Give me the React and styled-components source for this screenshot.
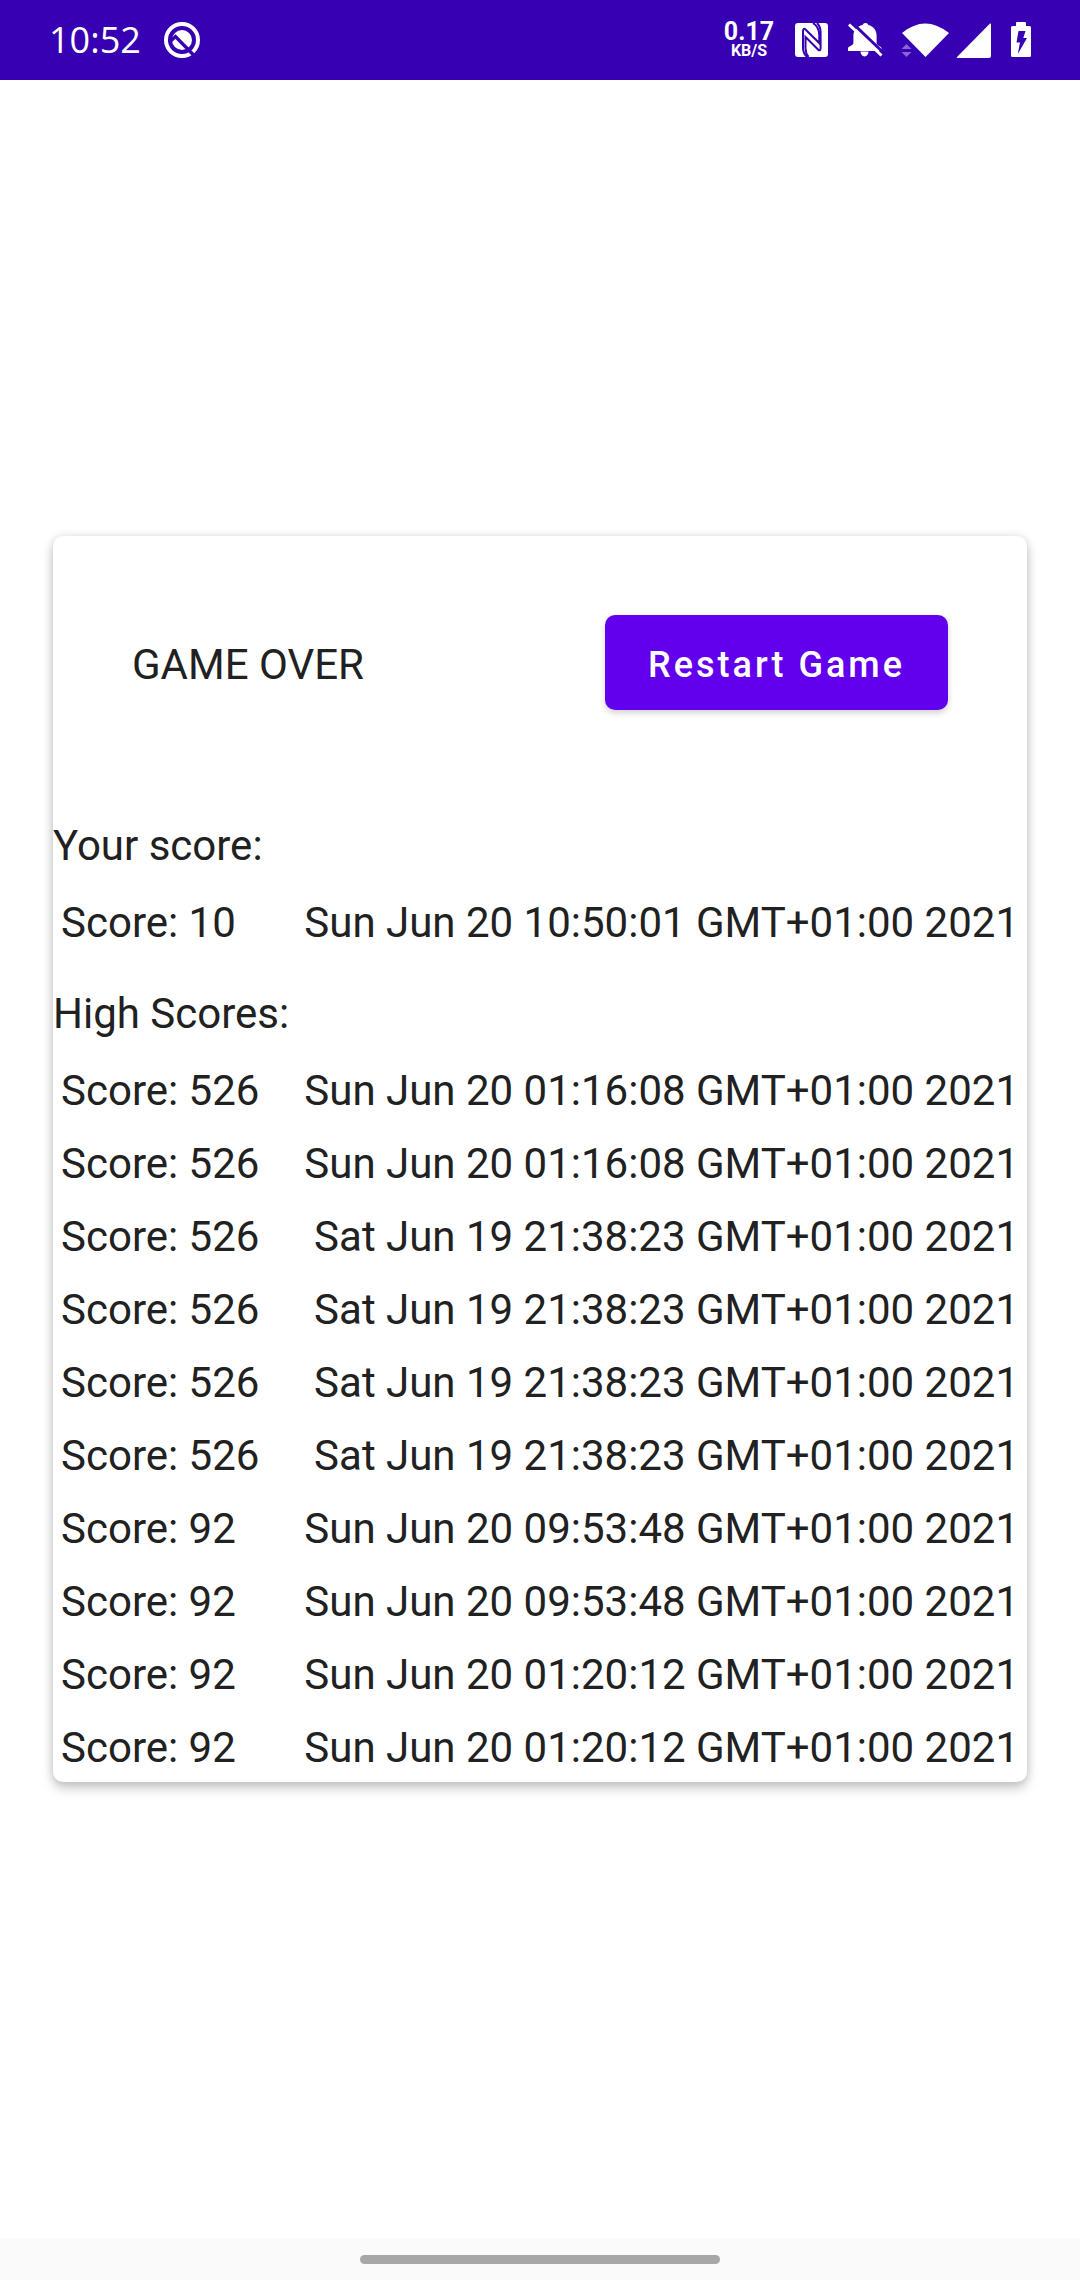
import React from "react";
import styled, { createGlobalStyle } from "styled-components";

const GlobalStyle = createGlobalStyle`
  *, *::before, *::after { box-sizing: border-box; }
  body {
    margin: 0;
    background: #ffffff;
    color: #212121;
    font-family: Roboto, "Noto Sans", sans-serif;
  }
`;

const Screen = styled.div`
  display: flex;
  flex-direction: column;
  min-height: 100vh;
`;

const StatusBar = styled.header`
  display: flex;
  align-items: center;
  justify-content: space-between;
  height: 80px;
  padding: 0 47px 0 49px;
  background: #3700b3;
  color: #ffffff;
`;

const StatusGroup = styled.div`
  display: flex;
  align-items: center;
  gap: ${(p) => p.$gap}px;
`;

const Clock = styled.time`
  font-family: "Open Sans", "Noto Sans", sans-serif;
  font-size: 36px;
  line-height: 48px;
`;

const Speed = styled.div`
  display: flex;
  flex-direction: column;
  align-items: center;
  width: 56px;
  font-weight: 700;
`;

const SpeedValue = styled.span`
  font-size: 25px;
  line-height: 22px;
`;

const SpeedUnit = styled.span`
  font-size: 16px;
  line-height: 16px;
`;

const Icon = styled.svg`
  display: block;
  flex: none;
`;

const Main = styled.main`
  flex: 1;
  display: flex;
  flex-direction: column;
  justify-content: center;
  padding: 0 53px;
`;

const Card = styled.section`
  border-radius: 10px;
  background: #ffffff;
  box-shadow: 0 6px 12px rgba(0, 0, 0, 0.22), 0 0 8px rgba(0, 0, 0, 0.1);
  font-size: 42px;
  line-height: 49px;
`;

const CardHeader = styled.div`
  display: flex;
  align-items: center;
  justify-content: space-between;
  padding: 79px;
`;

const Title = styled.h1`
  margin: 0;
  padding-top: 4px;
  font-size: 42px;
  font-weight: 400;
`;

const RestartButton = styled.button`
  height: 95px;
  padding: 4px 43px 0;
  border: 0;
  border-radius: 10px;
  background: #6200ee;
  box-shadow: 0 3px 6px rgba(0, 0, 0, 0.18);
  color: #ffffff;
  font-family: inherit;
  font-size: 36px;
  font-weight: 500;
  line-height: 44px;
  letter-spacing: 3px;
  white-space: nowrap;
  cursor: pointer;
`;

const SectionTitle = styled.h2`
  margin: 0;
  padding: 32px 0 14px;
  font-size: 42px;
  font-weight: 400;
`;

const ScoreTable = styled.table`
  width: 100%;
  border-collapse: collapse;
`;

const Cell = styled.td`
  padding: 14px 8px 10px;
  text-align: ${(p) => p.$align};
  white-space: nowrap;
`;

const NavigationBar = styled.footer`
  display: flex;
  align-items: center;
  justify-content: center;
  height: 42px;
  background: #fafafa;
`;

const HomeHandle = styled.div`
  width: 360px;
  height: 9px;
  border-radius: 5px;
  background: #a7a7a7;
`;

const currentScore = [{ score: 10, date: "Sun Jun 20 10:50:01 GMT+01:00 2021" }];

const highScores = [
  { score: 526, date: "Sun Jun 20 01:16:08 GMT+01:00 2021" },
  { score: 526, date: "Sun Jun 20 01:16:08 GMT+01:00 2021" },
  { score: 526, date: "Sat Jun 19 21:38:23 GMT+01:00 2021" },
  { score: 526, date: "Sat Jun 19 21:38:23 GMT+01:00 2021" },
  { score: 526, date: "Sat Jun 19 21:38:23 GMT+01:00 2021" },
  { score: 526, date: "Sat Jun 19 21:38:23 GMT+01:00 2021" },
  { score: 92, date: "Sun Jun 20 09:53:48 GMT+01:00 2021" },
  { score: 92, date: "Sun Jun 20 09:53:48 GMT+01:00 2021" },
  { score: 92, date: "Sun Jun 20 01:20:12 GMT+01:00 2021" },
  { score: 92, date: "Sun Jun 20 01:20:12 GMT+01:00 2021" },
];

function AppIcon() {
  return (
    <Icon width="38" height="38" viewBox="0 0 38 38" aria-hidden="true">
      <circle cx="19" cy="19" r="16" fill="none" stroke="#fff" strokeWidth="4" />
      <circle cx="19" cy="19" r="10" fill="#fff" />
      <path
        d="M6 21.5L12.5 15.5L31.5 35"
        fill="none"
        stroke="#3700b3"
        strokeWidth="3.4"
      />
    </Icon>
  );
}

function NfcIcon() {
  return (
    <Icon width="34" height="34" viewBox="0 0 34 34" aria-hidden="true">
      <rect x="0" y="0" width="33" height="34" rx="3" fill="#fff" />
      <path
        d="M18 0C22.5 3 24.3 7 24.3 12V20L10.5 6.5C9.3 5 8 5.6 8 8V25C8 29 9.8 31.8 12 34"
        fill="none"
        stroke="#3700b3"
        strokeWidth="2"
      />
      <path
        d="M13.5 34C11 31 10.5 28 10.5 25V14L23 26.5C24.4 28 25.6 27.5 25.6 25V9C25.6 5 24.5 2.5 22 0"
        fill="none"
        stroke="#3700b3"
        strokeWidth="2"
      />
    </Icon>
  );
}

function SilentIcon() {
  return (
    <Icon width="36" height="34" viewBox="0 0 36 34" aria-hidden="true">
      <path
        d="M18.5 0C20.5 0 21 1.2 21.3 2C26.5 3.2 29.6 7.5 29.6 12.5V20C29.6 22.5 33.8 23 34.5 25V28H1V25C1.8 23 6.4 22.5 6.4 20V12.5C6.4 7.5 9.8 3.2 15.6 2C15.9 1 16.5 0 18.5 0Z"
        fill="#fff"
      />
      <path d="M13.5 28.5H21.5A4 5 0 0 1 13.5 28.5Z" fill="#fff" />
      <path d="M4.8 -.5L37.8 31" stroke="#3700b3" strokeWidth="3" />
      <path d="M2 1.5L34.5 32.5" stroke="#fff" strokeWidth="3" />
    </Icon>
  );
}

function WifiIcon() {
  return (
    <Icon width="48" height="34" viewBox="0 0 48 34" aria-hidden="true">
      <path d="M1 10Q24 -9 48 10L24.5 34Z" fill="#fff" />
      <path d="M5.5 21L10.5 26H.5ZM.5 29H10.5L5.5 34Z" fill="#8a63d6" />
    </Icon>
  );
}

function SignalIcon() {
  return (
    <Icon width="35" height="35" viewBox="0 0 35 35" aria-hidden="true">
      <path d="M34 .5Q35 0 35 1.5V33Q35 35 33 35H1.5Q0 35 1 34Z" fill="#fff" />
    </Icon>
  );
}

function BatteryIcon() {
  return (
    <Icon width="24" height="36" viewBox="0 0 24 36" aria-hidden="true">
      <path
        d="M7 1Q7 0 8 0H16Q17 0 17 1V4H20.5Q22 4 22 5.5V33.5Q22 35 20.5 35H3.5Q2 35 2 33.5V5.5Q2 4 3.5 4H7Z"
        fill="#fff"
      />
      <path d="M9.5 9H16.5L14.3 16H18L8.8 32L11 20.5H7.5Z" fill="#3700b3" />
    </Icon>
  );
}

function Scores({ id, title, rows }) {
  return (
    <>
      <SectionTitle id={id}>{title}</SectionTitle>
      <ScoreTable aria-labelledby={id}>
        <tbody>
          {rows.map((row, index) => (
            <tr key={index}>
              <Cell $align="left">Score: {row.score}</Cell>
              <Cell $align="right">{row.date}</Cell>
            </tr>
          ))}
        </tbody>
      </ScoreTable>
    </>
  );
}

export default function App() {
  return (
    <Screen>
      <GlobalStyle />
      <StatusBar>
        <StatusGroup $gap={22}>
          <Clock>10:52</Clock>
          <AppIcon />
        </StatusGroup>
        <StatusGroup $gap={18}>
          <Speed>
            <SpeedValue>0.17</SpeedValue>
            <SpeedUnit>KB/S</SpeedUnit>
          </Speed>
          <NfcIcon />
          <SilentIcon />
          <StatusGroup $gap={7}>
            <WifiIcon />
            <SignalIcon />
          </StatusGroup>
          <BatteryIcon />
        </StatusGroup>
      </StatusBar>
      <Main>
        <Card>
          <CardHeader>
            <Title>GAME OVER</Title>
            <RestartButton type="button">Restart Game</RestartButton>
          </CardHeader>
          <Scores id="your-score" title="Your score:" rows={currentScore} />
          <Scores id="high-scores" title="High Scores:" rows={highScores} />
        </Card>
      </Main>
      <NavigationBar>
        <HomeHandle />
      </NavigationBar>
    </Screen>
  );
}
